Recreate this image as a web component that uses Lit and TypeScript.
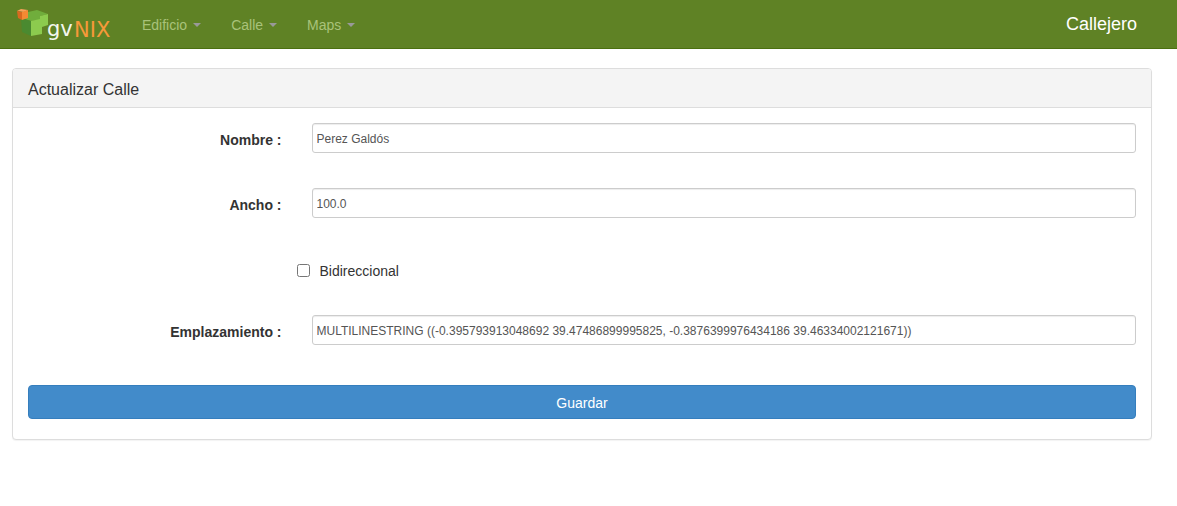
import { LitElement, html, css } from "lit";
import { customElement } from "lit/decorators.js";

@customElement("app-logo")
class AppLogo extends LitElement {
  static styles = css`
    :host { display: block; }
    svg { display: block; }
    .word { font-family: "DejaVu Sans", sans-serif; font-size: 21px; }
    .gv { fill: #f4f6ee; }
    .nix { fill: #f7993a; }
  `;
  render() {
    return html`
      <svg width="100" height="34" viewBox="15 6 100 34" role="img" aria-label="gvNIX">
        <path d="M24 12 L37 9 L48 13 L40 15 L40 19 L31 20 L21 17 Z" fill="#70ad3c" />
        <path d="M21 17 L31 20 L31 35 L22 31 Z" fill="#4a8a30" />
        <path d="M31 20 L40 18 L40 15 L48 13 L48 24 L42 26 L42 33 L31 35 Z" fill="#8ccb4e" />
        <path d="M17 10 L21 8 L28 9 L24 11 Z" fill="#f9a25a" />
        <path d="M17 10 L22 11 L22 19 L18 17 Z" fill="#d9691f" />
        <path d="M22 11 L28 9 L28 17 L22 19 Z" fill="#f58a33" />
        <text class="word gv" x="47" y="35">gv</text>
        <text class="word nix" x="74" y="36">NIX</text>
      </svg>
    `;
  }
}

@customElement("app-root")
class AppRoot extends LitElement {
  static styles = css`
    :host {
      display: block;
      font-family: "Liberation Sans", Arial, sans-serif;
      font-size: 14px;
      line-height: 20px;
      color: #333;
    }
    * { box-sizing: border-box; }
    .navbar {
      display: flex;
      align-items: center;
      height: 49px;
      padding: 0 40px 0 15px;
      background: #5f8225;
      border-bottom: 1px solid #4b7010;
    }
    .home { display: block; margin-right: 12px; }
    .menu { display: flex; flex: 1; margin: 0; padding: 0; list-style: none; }
    .menu a {
      display: flex;
      align-items: center;
      gap: 6px;
      padding: 15px 15px 13px;
      color: #a9c27a;
      text-decoration: none;
    }
    .caret {
      border: 4px solid transparent;
      border-top-color: #999;
      border-bottom: 0;
    }
    .app-name { font-size: 18px; color: #fff; text-decoration: none; }
    .page { padding: 19px 25px 20px 12px; }
    .panel {
      border: 1px solid #ddd;
      border-radius: 4px;
      background: #fff;
      box-shadow: 0 1px 1px rgba(0, 0, 0, 0.05);
    }
    .panel-heading {
      padding: 11px 15px 7px;
      border-bottom: 1px solid #ddd;
      border-radius: 3px 3px 0 0;
      background: #f4f4f4;
    }
    .panel-title { margin: 0; font-size: 16px; font-weight: 400; line-height: 20px; }
    form { padding: 15px 15px 20px; }
    .row {
      display: grid;
      grid-template-columns: calc(25% - 1px) 1fr;
      margin: 0 -15px 35px;
    }
    .row > * { margin: 0 15px; }
    .label { padding-top: 7px; font-weight: 700; text-align: right; }
    .field {
      height: 30px;
      min-width: 0;
      padding: 6px 4px 4px;
      border: 1px solid #ccc;
      border-radius: 3px;
      background: #fff;
      box-shadow: inset 0 1px 1px rgba(0, 0, 0, 0.075);
      color: #555;
      font: 12px/18px "Liberation Sans", Arial, sans-serif;
    }
    .row > .check {
      display: flex;
      align-items: center;
      grid-column: 2;
      gap: 10px;
      height: 27px;
      margin: 0;
      padding-top: 8px;
    }
    .check input { width: 13px; height: 13px; margin: 0; }
    .save {
      display: block;
      width: 100%;
      height: 34px;
      margin-top: 40px;
      padding: 7px 12px 5px;
      border: 1px solid #357ebd;
      border-radius: 4px;
      background: #428bca;
      color: #fff;
      font: 14px/20px "Liberation Sans", Arial, sans-serif;
    }
    .row.last { margin-bottom: 0; }
  `;
  render() {
    return html`
      <nav class="navbar">
        <a class="home" href="#"><app-logo></app-logo></a>
        <ul class="menu">
          ${["Edificio", "Calle", "Maps"].map(
            (name) => html`<li><a href="#">${name}<span class="caret"></span></a></li>`
          )}
        </ul>
        <a class="app-name" href="#">Callejero</a>
      </nav>
      <main class="page">
        <section class="panel">
          <div class="panel-heading"><h3 class="panel-title">Actualizar Calle</h3></div>
          <form>
            <div class="row">
              <label class="label" for="nombre">Nombre :</label>
              <input class="field" id="nombre" type="text" value="Perez Galdós" />
            </div>
            <div class="row">
              <label class="label" for="ancho">Ancho :</label>
              <input class="field" id="ancho" type="text" value="100.0" />
            </div>
            <div class="row">
              <label class="check"><input type="checkbox" />Bidireccional</label>
            </div>
            <div class="row last">
              <label class="label" for="emplazamiento">Emplazamiento :</label>
              <input class="field" id="emplazamiento" type="text"
                value="MULTILINESTRING ((-0.395793913048692 39.47486899995825, -0.3876399976434186 39.46334002121671))" />
            </div>
            <button class="save" type="button">Guardar</button>
          </form>
        </section>
      </main>
    `;
  }
}
